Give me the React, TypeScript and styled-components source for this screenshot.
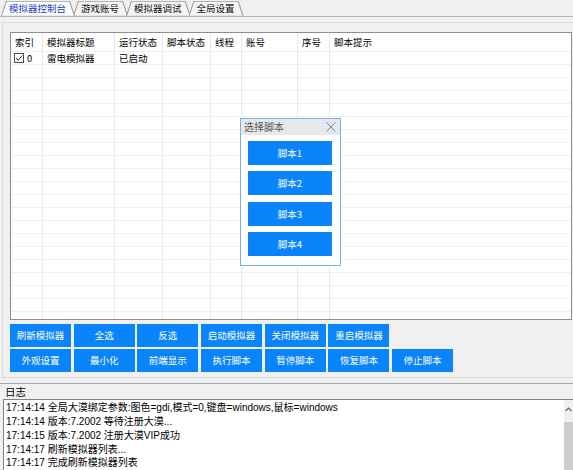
import styled, { createGlobalStyle } from 'styled-components';

const GlobalStyle = createGlobalStyle`
  html, body {
    margin: 0;
    padding: 0;
  }
  body {
    width: 573px;
    height: 470px;
    overflow: hidden;
    background: #f0f0f0;
    color: #000;
    font-family: "Noto Sans CJK SC", "Microsoft YaHei", sans-serif;
    font-size: 9.5px;
  }
`;

const tabs = ['模拟器控制台', '游戏账号', '模拟器调试', '全局设置'];

const columns = ['索引', '模拟器标题', '运行状态', '脚本状态', '线程', '账号', '序号', '脚本提示'];

const buttonRows = [
  ['刷新模拟器', '全选', '反选', '启动模拟器', '关闭模拟器', '重启模拟器'],
  ['外观设置', '最小化', '前端显示', '执行脚本', '暂停脚本', '恢复脚本', '停止脚本'],
];

const scripts = ['脚本1', '脚本2', '脚本3', '脚本4'];

const logs = [
  '17:14:14 全局大漠绑定参数:图色=gdi,模式=0,键盘=windows,鼠标=windows',
  '17:14:14 版本:7.2002 等待注册大漠...',
  '17:14:15 版本:7.2002 注册大漠VIP成功',
  '17:14:17 刷新模拟器列表...',
  '17:14:17 完成刷新模拟器列表',
];

const EMPTY_ROWS = 20;

const App = () => {
  return (
    <Window>
      <GlobalStyle />
      <TabBar>
        {tabs.map((t, i) => (
          <Tab key={t} $active={i === 0} $index={i}>
            <span>{t}</span>
          </Tab>
        ))}
      </TabBar>
      <TabPage>
        <Panel>
          <GridWrap>
            <GridRow $header>
              {columns.map((c) => (
                <Cell key={c}>{c}</Cell>
              ))}
            </GridRow>
            <GridRow>
              <Cell>
                <CheckBox>
                  <svg width="8" height="8" viewBox="0 0 8 8">
                    <path d="M1 4.2 L3.2 6.3 L7 1.6" fill="none" stroke="#222" strokeWidth="1" />
                  </svg>
                </CheckBox>
                0
              </Cell>
              <Cell>雷电模拟器</Cell>
              <Cell>已启动</Cell>
              <Cell />
              <Cell />
              <Cell />
              <Cell />
              <Cell />
            </GridRow>
            {Array.from({ length: EMPTY_ROWS }).map((_, r) => (
              <GridRow key={r}>
                {columns.map((c) => (
                  <Cell key={c} />
                ))}
              </GridRow>
            ))}

            <Dialog>
              <DialogTitle>
                <span>选择脚本</span>
                <svg width="10" height="10" viewBox="0 0 10 10">
                  <path d="M0.5 0.5 L9.5 9.5 M9.5 0.5 L0.5 9.5" stroke="#5b8fd4" strokeWidth="1" />
                </svg>
              </DialogTitle>
              <DialogBody>
                {scripts.map((s) => (
                  <DialogButton key={s}>{s}</DialogButton>
                ))}
              </DialogBody>
            </Dialog>
          </GridWrap>

          <ButtonArea>
            {buttonRows.map((row, i) => (
              <ButtonRow key={i}>
                {row.map((b) => (
                  <ActionButton key={b}>{b}</ActionButton>
                ))}
              </ButtonRow>
            ))}
          </ButtonArea>
        </Panel>
      </TabPage>

      <Splitter />
      <LogLabel>日志</LogLabel>
      <LogBox>
        <LogLines>
          {logs.map((l, i) => (
            <LogLine key={i}>{l}</LogLine>
          ))}
        </LogLines>
        <ScrollBar>
          <ScrollArrow>
            <svg width="7" height="5" viewBox="0 0 7 5">
              <path d="M0.5 4 L3.5 1 L6.5 4" fill="none" stroke="#606060" strokeWidth="1.1" />
            </svg>
          </ScrollArrow>
          <ScrollThumb />
        </ScrollBar>
      </LogBox>
    </Window>
  );
};

const Window = styled.div`
  width: 573px;
  height: 470px;
  display: flex;
  flex-direction: column;
  overflow: hidden;
`;

const TabBar = styled.div`
  display: flex;
  align-items: flex-end;
  height: 17px;
  padding-left: 1px;
  border-bottom: 1px solid #b4b4b4;
`;

const Tab = styled.div<{ $active?: boolean; $index: number }>`
  position: relative;
  z-index: ${(p) => (p.$active ? 10 : p.$index + 1)};
  height: 15px;
  padding: 0 9px 0 8px;
  margin-left: ${(p) => (p.$index === 0 ? '0' : '-2px')};
  display: flex;
  align-items: center;
  color: ${(p) => (p.$active ? '#1f3fc4' : '#111')};
  line-height: 15px;
  white-space: nowrap;

  span {
    position: relative;
    z-index: 1;
  }

  &::before,
  &::after {
    content: '';
    position: absolute;
    inset: 0;
    z-index: -1;
  }

  &::before {
    background: #9c9c9c;
    clip-path: polygon(5px 0, calc(100% - 5px) 0, 100% 100%, 0 100%);
  }

  &::after {
    background: ${(p) => (p.$active ? '#fdfdfd' : '#f4f4f4')};
    clip-path: polygon(
      5.8px 1px,
      calc(100% - 5.8px) 1px,
      calc(100% - 1.1px) 100%,
      1.1px 100%
    );
  }
`;

const TabPage = styled.div`
  padding-top: 5px;
`;

const Panel = styled.div`
  margin-left: 2px;
  border-top: 1px solid #dadada;
  border-left: 1px solid #dadada;
  border-bottom: 1px solid #d6d6d6;
  padding: 9px 0 5px 7px;
`;

const GridWrap = styled.div`
  position: relative;
  box-sizing: border-box;
  width: 562px;
  height: 288px;
  border: 1px solid #8e8e8e;
  background: #fff;
  overflow: hidden;
`;

const GridRow = styled.div<{ $header?: boolean }>`
  display: grid;
  grid-template-columns: 32px 72px 48px 48px 31px 56px 32px 1fr;
  height: ${(p) => (p.$header ? '19px' : '13px')};
  box-sizing: border-box;
  border-bottom: 1px solid #f0f0f0;
  line-height: ${(p) => (p.$header ? '18px' : '12px')};
`;

const Cell = styled.div`
  box-sizing: border-box;
  display: flex;
  align-items: center;
  padding-left: 4px;
  border-right: 1px solid #e8e8e8;
  white-space: nowrap;
  overflow: hidden;

  &:last-child {
    border-right: none;
  }
`;

const CheckBox = styled.span`
  box-sizing: border-box;
  width: 10px;
  height: 10px;
  margin: 0 3px 0 -1px;
  border: 1px solid #4a4a4a;
  display: inline-flex;
  align-items: center;
  justify-content: center;
  background: #fff;
`;

const Dialog = styled.div`
  position: absolute;
  left: 229px;
  top: 85px;
  width: 101px;
  height: 148px;
  box-sizing: border-box;
  border: 1px solid #7fb1e8;
  background: #fff;
  display: flex;
  flex-direction: column;
`;

const DialogTitle = styled.div`
  height: 16px;
  background: #e8e8e8;
  display: flex;
  align-items: center;
  justify-content: space-between;
  padding: 0 4px 0 3px;
  color: #555;
  font-size: 10px;
`;

const DialogBody = styled.div`
  display: flex;
  flex-direction: column;
  gap: 6.5px;
  padding: 6px 0 0 7px;
`;

const DialogButton = styled.div`
  width: 84px;
  height: 24px;
  background: #0a84fa;
  color: #fff;
  display: flex;
  align-items: center;
  justify-content: center;
`;

const ButtonArea = styled.div`
  display: flex;
  flex-direction: column;
  gap: 2px;
  margin-top: 4px;
`;

const ButtonRow = styled.div`
  display: flex;
  gap: 2.7px;
`;

const ActionButton = styled.div`
  width: 61px;
  height: 23px;
  background: #0a84fa;
  color: #fff;
  display: flex;
  align-items: center;
  justify-content: center;
  white-space: nowrap;
`;

const Splitter = styled.div`
  height: 6px;
  border-bottom: 1px solid #a6a6a6;
`;

const LogLabel = styled.div`
  height: 15px;
  line-height: 15px;
  padding-left: 5px;
  font-size: 10.5px;
`;

const LogBox = styled.div`
  flex: 1;
  margin-left: 3px;
  display: flex;
  border-top: 1px solid #828282;
  border-left: 1px solid #828282;
  background: #fff;
`;

const LogLines = styled.div`
  flex: 1;
  padding: 1px 0 0 2px;
  font-family: "Liberation Sans", "Noto Sans CJK SC", sans-serif;
  font-size: 10px;
`;

const LogLine = styled.div`
  height: 13.75px;
  line-height: 13.75px;
  white-space: nowrap;
`;

const ScrollBar = styled.div`
  width: 9px;
  background: #f0f0f0;
  display: flex;
  flex-direction: column;
`;

const ScrollArrow = styled.div`
  height: 16px;
  display: flex;
  align-items: center;
  justify-content: center;
  padding-top: 2px;
  box-sizing: border-box;
`;

const ScrollThumb = styled.div`
  flex: 1;
  margin-top: 6px;
  background: #cdcdcd;
`;

export default App;
